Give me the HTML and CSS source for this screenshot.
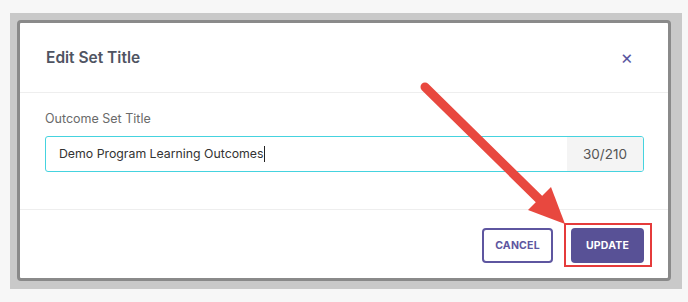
FILE: index.html
```html
<!DOCTYPE html>
<html lang="en">
<head>
    <meta charset="UTF-8">
    <meta name="viewport" content="width=device-width, initial-scale=1.0">
    <title>Edit Set Title</title>
    <link rel="stylesheet" href="styles.css">
</head>
<body>
    <div class="frame">
        <div class="modal">
            <div class="modal-header">
                <h3 class="modal-title">Edit Set Title</h3>
                <span class="close">&#215;</span>
            </div>
            <div class="modal-body">
                <label class="label">Outcome Set Title</label>
                <div class="field">
                    <span class="field-text">Demo Program Learning Outcomes<span class="caret"></span></span>
                    <span class="counter">30/210</span>
                </div>
            </div>
            <div class="modal-footer">
                <button class="btn btn-cancel">CANCEL</button>
                <span class="highlight">
                    <button class="btn btn-update">UPDATE</button>
                </span>
            </div>
        </div>
    </div>

    <!-- annotation arrow -->
    <svg class="arrow" width="688" height="302" viewBox="0 0 688 302">
        <line x1="425" y1="87" x2="543" y2="203" stroke="#e8483f" stroke-width="9" stroke-linecap="round"/>
        <polygon points="565,224 551,187 528,210" fill="#e8483f"/>
    </svg>
</body>
</html>
```

FILE: styles.css
```css
*{margin: 0;padding: 0;box-sizing: border-box;}
body{background-color: #f7f7f7;font-family: Inter, "Noto Sans", sans-serif;width: 688px;height: 302px;overflow: hidden;}

.frame{margin: 13px 0 0 10px;width: 672px;height: 276px;background-color: #c9c9c9;padding: 7px 11px 8px 7px;}
.modal{background-color: #fff;border: 3px solid #8a8a8a;border-radius: 4px;height: 261px;display: flex;flex-direction: column;}

.modal-header{height: 70px;display: flex;align-items: center;justify-content: space-between;padding: 0 35px 0 26px;border-bottom: 1px solid #eeeeee;}
.modal-title{font-size: 15.5px;font-weight: 600;color: #4f5462;}
.close{font-size: 19px;color: #5b579f;line-height: 1;}

.modal-body{padding: 18px 24px 37px 25px;border-bottom: 1px solid #eeeeee;}
.label{display: block;font-size: 12.5px;color: #6a6a6a;margin-bottom: 10px;}
.field{display: flex;height: 36px;border: 1px solid #45d3df;border-radius: 3px;overflow: hidden;}
.field-text{flex: 1;font-size: 12.3px;color: #333;line-height: 34px;padding-left: 13px;}
.caret{display: inline-block;width: 1px;height: 16px;background-color: #222;vertical-align: -4px;}
.counter{width: 76px;background-color: #f4f4f4;font-size: 13.5px;color: #555;text-align: center;line-height: 34px;}

.modal-footer{flex: 1;display: flex;justify-content: flex-end;align-items: flex-start;padding: 13px 16px 0 0;gap: 11px;}
.btn{height: 35px;border-radius: 4px;font-family: Inter, "Noto Sans", sans-serif;font-size: 10.5px;font-weight: 700;letter-spacing: 0.2px;}
.btn-cancel{width: 71px;margin-top: 5px;background-color: #fff;border: 2px solid #5e56a0;color: #5e56a0;}
.highlight{display: flex;border: 2px solid #e53b3b;padding: 3px 6px 2px 5px;}
.btn-update{width: 73px;background-color: #585196;border: none;color: #fff;}

.arrow{position: absolute;left: 0;top: 0;}
```
